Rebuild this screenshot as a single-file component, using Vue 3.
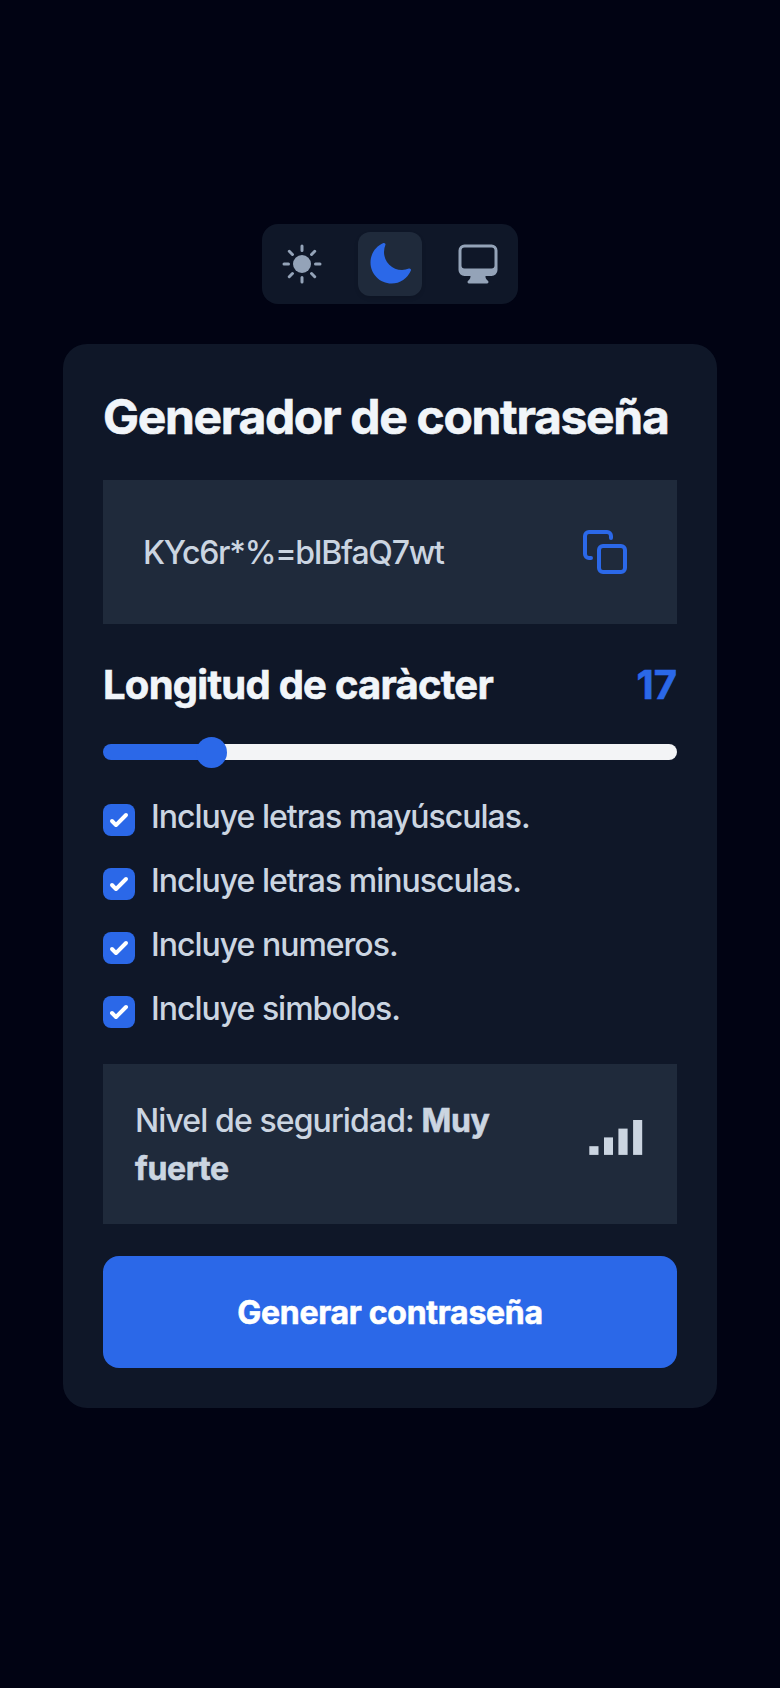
<script setup>
import { ref, computed } from 'vue'

const theme = ref('dark')
const themes = ['light', 'dark', 'system']
const password = ref('KYc6r*%=bIBfaQ7wt')
const length = ref(17)
const min = 4
const max = 80
const ratio = computed(() => (length.value - min) / (max - min))
const fill = computed(() => `calc((100% - 31px) * ${ratio.value} + 15.5px)`)

const options = ref([
  { label: 'Incluye letras mayúsculas.', on: true },
  { label: 'Incluye letras minusculas.', on: true },
  { label: 'Incluye numeros.', on: true },
  { label: 'Incluye simbolos.', on: true },
])
</script>

<template>
  <main class="page">
    <nav class="themes">
      <button
        v-for="t in themes"
        :key="t"
        class="theme"
        :class="{ active: theme === t }"
        @click="theme = t"
      >
        <svg v-if="t === 'light'" class="icon" viewBox="0 0 24 24">
          <circle cx="12" cy="12" r="4.5" fill="currentColor" />
          <path
            d="M12 3v2.25M12 18.75V21M3 12h2.25M18.75 12H21M18.364 5.636l-1.591 1.591M7.227 16.773l-1.591 1.591M18.364 18.364l-1.591-1.591M7.227 7.227 5.636 5.636"
            fill="none" stroke="currentColor" stroke-width="1.5" stroke-linecap="round"
          />
        </svg>
        <svg v-else-if="t === 'dark'" class="icon" viewBox="0 0 24 24" fill="currentColor">
          <path d="M9.528 1.718a.75.75 0 0 1 .162.819A8.97 8.97 0 0 0 9 6a9 9 0 0 0 9 9 8.97 8.97 0 0 0 3.463-.69.75.75 0 0 1 .981.98 10.503 10.503 0 0 1-9.694 6.46c-5.799 0-10.5-4.701-10.5-10.5 0-4.368 2.667-8.112 6.46-9.694a.75.75 0 0 1 .818.162Z" />
        </svg>
        <svg v-else class="icon" viewBox="0 0 24 24" fill="currentColor" fill-rule="evenodd">
          <path d="M2.25 5.25a3 3 0 0 1 3-3h13.5a3 3 0 0 1 3 3V15a3 3 0 0 1-3 3h-3v.257c0 .597.237 1.17.659 1.591l.621.622a.75.75 0 0 1-.53 1.28h-9a.75.75 0 0 1-.53-1.28l.621-.622a2.25 2.25 0 0 0 .659-1.59V18h-3a3 3 0 0 1-3-3V5.25Zm1.5 0v7.5a1.5 1.5 0 0 0 1.5 1.5h13.5a1.5 1.5 0 0 0 1.5-1.5v-7.5a1.5 1.5 0 0 0-1.5-1.5H5.25a1.5 1.5 0 0 0-1.5 1.5Z" />
        </svg>
      </button>
    </nav>

    <section class="card">
      <h1 class="title">Generador de contraseña</h1>

      <div class="password">
        <span class="value">{{ password }}</span>
        <button class="copy">
          <svg class="icon" viewBox="0 0 24 24" fill="none" stroke="currentColor" stroke-width="2" stroke-linecap="round" stroke-linejoin="round">
            <rect x="9" y="9" width="13" height="13" rx="2" />
            <path d="M5 15H4a2 2 0 0 1-2-2V4a2 2 0 0 1 2-2h9a2 2 0 0 1 2 2v1" />
          </svg>
        </button>
      </div>

      <div class="length">
        <span class="length-label">Longitud de caràcter</span>
        <span class="length-value">{{ length }}</span>
      </div>

      <div class="slider">
        <div class="filled" :style="{ width: fill }"></div>
        <div class="thumb"></div>
        <div class="rest"></div>
      </div>

      <div class="options">
        <label v-for="o in options" :key="o.label" class="option" @click="o.on = !o.on">
          <span class="box" :class="{ on: o.on }">
            <svg v-if="o.on" viewBox="0 0 16 16" fill="currentColor">
              <path d="M12.207 4.793a1 1 0 0 1 0 1.414l-5 5a1 1 0 0 1-1.414 0l-2-2a1 1 0 0 1 1.414-1.414L6.5 9.086l4.293-4.293a1 1 0 0 1 1.414 0z" />
            </svg>
          </span>
          <span class="option-text">{{ o.label }}</span>
        </label>
      </div>

      <div class="level">
        <p class="level-text">Nivel de seguridad: <strong>Muy fuerte</strong></p>
        <svg class="signal" viewBox="0 0 54 36" fill="currentColor">
          <rect x="0.3" y="26.2" width="9.2" height="8.7" />
          <rect x="15" y="17.4" width="9" height="17.5" />
          <rect x="29.4" y="8.6" width="9.2" height="26.3" />
          <rect x="44.1" y="0" width="9.1" height="34.9" />
        </svg>
      </div>

      <button class="generate">Generar contraseña</button>
    </section>
  </main>
</template>

<style>
body {
  background: #010313;
}
</style>

<style scoped>
.page {
  box-sizing: border-box;
  min-height: 1688px;
  padding: 224px 63px 0;
  display: flex;
  flex-direction: column;
  align-items: center;
  gap: 40px;
  background: #010313;
  color: #cbd5e1;
  font-family: Inter, 'Liberation Sans', sans-serif;
  font-size: 32px;
  font-weight: 450;
  line-height: 48px;
}
button {
  border: 0;
  padding: 0;
  margin: 0;
  background: none;
  font: inherit;
  cursor: pointer;
}
.themes {
  display: flex;
  gap: 24px;
  padding: 8px;
  border-radius: 16px;
  background: #0f1728;
}
.theme {
  width: 64px;
  height: 64px;
  display: grid;
  place-items: center;
  border-radius: 12px;
  color: #94a3b8;
}
.theme.active {
  background: #1f2a3b;
  color: #2b68e8;
  box-shadow: 0 2px 4px rgba(0, 0, 0, 0.1);
}
.icon {
  display: block;
  width: 48px;
  height: 48px;
}
.card {
  box-sizing: border-box;
  width: 100%;
  height: 1064px;
  padding: 40px;
  border-radius: 24px;
  background: #0f1728;
}
.title,
.length,
.level-text strong,
.generate {
  font-weight: 700;
  -webkit-text-stroke: 0.6px currentColor;
}
.title {
  margin: 0;
  height: 64px;
  padding-top: 1px;
  font-size: 48px;
  line-height: 64px;
  letter-spacing: -1.32px;
  color: #f1f5f9;
  white-space: nowrap;
}
.password {
  box-sizing: border-box;
  height: 144px;
  margin-top: 31px;
  padding: 0 48px 0 40px;
  display: flex;
  align-items: center;
  justify-content: space-between;
  background: #1f2a3b;
}
.value {
  padding-top: 2px;
  letter-spacing: -1.25px;
}
.copy {
  color: #2b68e8;
}
.length {
  margin-top: 33px;
  display: flex;
  justify-content: space-between;
  font-size: 40px;
  line-height: 56px;
  letter-spacing: -0.75px;
  color: #f1f5f9;
}
.length-value {
  color: #2b68e8;
  letter-spacing: 0;
}
.slider {
  height: 16px;
  margin-top: 31px;
  display: flex;
  align-items: center;
}
.filled {
  flex: none;
  height: 16px;
  border-radius: 8px 0 0 8px;
  background: #2b68e8;
}
.thumb {
  flex: none;
  z-index: 1;
  width: 31px;
  height: 31px;
  margin: 0 -15.5px;
  border-radius: 50%;
  background: #2b68e8;
}
.rest {
  flex: 1;
  height: 16px;
  border-radius: 0 8px 8px 0;
  background: #f3f4f6;
}
.options {
  margin-top: 32px;
  display: grid;
  gap: 16px;
}
.option {
  height: 48px;
  display: flex;
  align-items: center;
  gap: 16px;
}
.box {
  width: 32px;
  height: 32px;
  margin-top: 8px;
  border-radius: 8px;
  background: #1f2a3b;
  color: #fff;
}
.box.on {
  background: #2b68e8;
}
.box svg {
  display: block;
}
.option-text {
  padding-top: 2px;
  letter-spacing: -1px;
}
.level {
  box-sizing: border-box;
  height: 160px;
  margin-top: 32px;
  padding: 0 32px;
  display: flex;
  align-items: center;
  justify-content: space-between;
  background: #1f2a3b;
}
.level-text {
  margin: 0;
  padding-top: 2px;
  width: 400px;
  letter-spacing: -0.9px;
}
.level-text strong {
  letter-spacing: -0.35px;
}
.signal {
  width: 54px;
  height: 36px;
  margin-right: 2px;
  margin-top: -12px;
}
.generate {
  display: block;
  width: 100%;
  height: 112px;
  padding-top: 2px;
  margin-top: 32px;
  border-radius: 16px;
  background: #2b68e8;
  color: #fff;
  letter-spacing: -0.28px;
}
</style>
